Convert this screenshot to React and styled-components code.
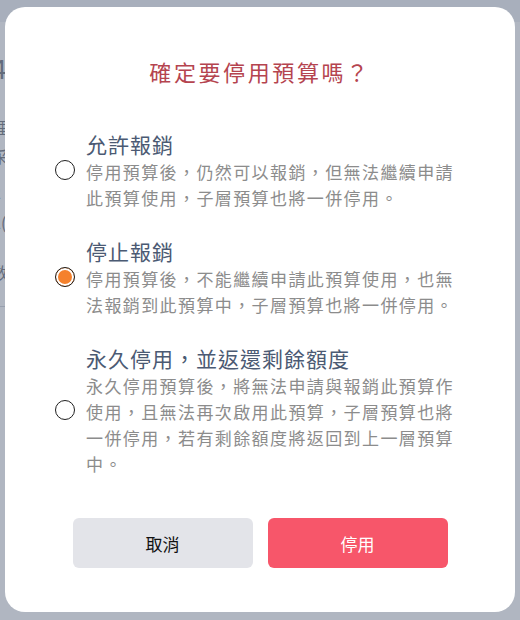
import React, { useState } from "react";
import styled, { createGlobalStyle } from "styled-components";

const GlobalStyle = createGlobalStyle`
  html, body {
    margin: 0;
    padding: 0;
  }
  body {
    font-family: "Noto Sans CJK TC", "Noto Sans", sans-serif;
    background: #ffffff;
  }
  * {
    box-sizing: border-box;
  }
`;

const options = [
  {
    id: "allow",
    title: "允許報銷",
    desc: "停用預算後，仍然可以報銷，但無法繼續申請此預算使用，子層預算也將一併停用。",
  },
  {
    id: "stop",
    title: "停止報銷",
    desc: "停用預算後，不能繼續申請此預算使用，也無法報銷到此預算中，子層預算也將一併停用。",
  },
  {
    id: "forever",
    title: "永久停用，並返還剩餘額度",
    desc: "永久停用預算後，將無法申請與報銷此預算作使用，且無法再次啟用此預算，子層預算也將一併停用，若有剩餘額度將返回到上一層預算中。",
  },
];

// 背後頁面只露出左邊一點點
const pageLines = [
  { text: "4", size: 26, top: 30 },
  { text: "理", size: 16, top: 35 },
  { text: "采", size: 16, top: 10 },
  { text: "2", size: 16, top: 16 },
  { text: "2(", size: 16, top: 11 },
  { text: "数", size: 16, top: 31 },
];

const App = () => {
  const [selected, setSelected] = useState("stop");

  return (
    <>
      <GlobalStyle />
      <S.Page>
        <S.PageHeader />
        <S.PageBody>
          {pageLines.map((line, i) => (
            <S.PageLine key={i} $size={line.size} $top={line.top}>
              {line.text}
            </S.PageLine>
          ))}
          <S.PageRule />
        </S.PageBody>
      </S.Page>
      <S.Overlay>
        <S.Modal>
          <S.Title>確定要停用預算嗎？</S.Title>
          <S.OptionList>
            {options.map((opt) => (
              <S.Option key={opt.id} onClick={() => setSelected(opt.id)}>
                <S.Radio $checked={selected === opt.id} />
                <S.OptionText>
                  <S.OptionTitle>{opt.title}</S.OptionTitle>
                  <S.OptionDesc>{opt.desc}</S.OptionDesc>
                </S.OptionText>
              </S.Option>
            ))}
          </S.OptionList>
          <S.Buttons>
            <S.Button>取消</S.Button>
            <S.Button $primary>停用</S.Button>
          </S.Buttons>
        </S.Modal>
      </S.Overlay>
    </>
  );
};

const S = {
  Page: styled.div`
    min-height: 620px;
    background: #ffffff;
    display: flex;
    flex-direction: column;
  `,
  PageHeader: styled.div`
    height: 22px;
    background: #f0f2f5;
  `,
  PageBody: styled.div`
    display: flex;
    flex-direction: column;
    margin-left: -8px;
  `,
  PageLine: styled.div`
    margin-top: ${({ $top }) => $top}px;
    font-size: ${({ $size }) => $size}px;
    line-height: 1.2;
    color: #6a707a;
  `,
  PageRule: styled.div`
    margin-top: 24px;
    height: 1px;
    width: 60px;
    background: #d0d4da;
  `,
  Overlay: styled.div`
    position: fixed;
    inset: 0;
    background: rgba(90, 102, 125, 0.48);
    display: flex;
    padding: 7px 5px 8px;
  `,
  Modal: styled.div`
    flex: 1;
    background: #ffffff;
    border-radius: 20px;
    display: flex;
    flex-direction: column;
    padding: 48px 0 44px;
  `,
  Title: styled.h2`
    margin: 0;
    text-align: center;
    font-size: 22px;
    line-height: 32px;
    font-weight: 400;
    letter-spacing: 2.6px;
    color: #b5444f;
  `,
  OptionList: styled.div`
    margin-top: 42px;
    padding: 0 54px 0 50px;
    display: flex;
    flex-direction: column;
    gap: 25px;
  `,
  Option: styled.div`
    display: flex;
    align-items: center;
    gap: 11px;
    cursor: pointer;
  `,
  Radio: styled.span`
    flex: none;
    width: 20px;
    height: 20px;
    border-radius: 50%;
    border: 1.5px solid #1f1f1f;
    background: ${({ $checked }) => ($checked ? "#f5812c" : "#ffffff")};
    box-shadow: inset 0 0 0 2px #ffffff;
  `,
  OptionText: styled.div`
    flex: 1;
    display: flex;
    flex-direction: column;
  `,
  OptionTitle: styled.div`
    font-size: 21px;
    line-height: 30px;
    letter-spacing: 1px;
    color: #4b5a73;
  `,
  OptionDesc: styled.div`
    font-size: 17px;
    line-height: 26px;
    letter-spacing: 1.4px;
    color: #8c8c8c;
  `,
  Buttons: styled.div`
    margin-top: auto;
    display: flex;
    justify-content: center;
    gap: 15px;
  `,
  Button: styled.button`
    width: 180px;
    height: 50px;
    border: none;
    border-radius: 6px;
    font-family: inherit;
    font-size: 17px;
    background: ${({ $primary }) => ($primary ? "#f7566a" : "#e3e4e9")};
    color: ${({ $primary }) => ($primary ? "#ffffff" : "#111111")};
    cursor: pointer;
  `,
};

export default App;
